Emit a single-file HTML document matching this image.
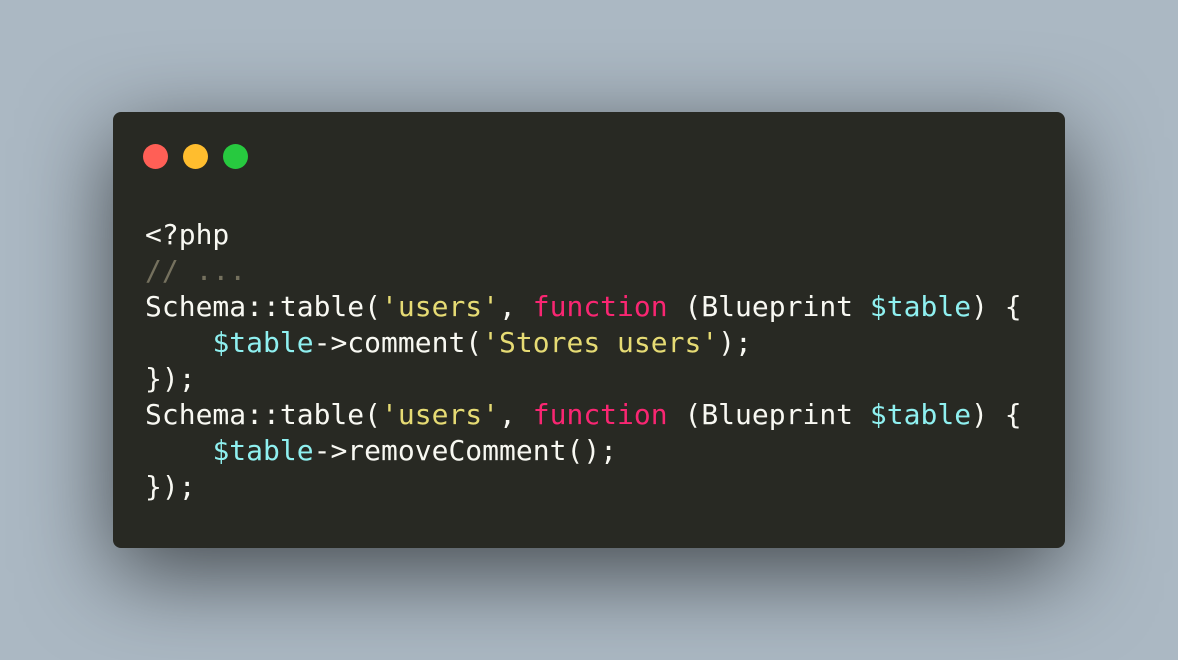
<!DOCTYPE html>
<html><head><style>
html,body{margin:0;padding:0;}
body{width:1178px;height:660px;background:#abb8c3;position:relative;overflow:hidden;}
.win{position:absolute;left:113px;top:112px;width:952px;height:436px;background:#282923;border-radius:8px;box-shadow:0 25px 90px rgba(0,0,0,0.6);}
.dot{position:absolute;top:32px;width:25px;height:25px;border-radius:50%;}
pre{position:absolute;left:32px;top:105px;margin:0;font-family:"DejaVu Sans Mono",monospace;font-size:28px;line-height:36px;color:#f8f8f2;}
.s{color:#e6db74}.k{color:#f92672}.v{color:#8ff0f0}.c{color:#75715e}
</style></head><body>
<div class="win">
<div class="dot" style="left:30px;background:#ff5f56"></div>
<div class="dot" style="left:70px;background:#ffbd2e"></div>
<div class="dot" style="left:110px;background:#27c93f"></div>
<pre>&lt;?php
<span class="c">// ...</span>
Schema::table(<span class="s">'users'</span>, <span class="k">function</span> (Blueprint <span class="v">$table</span>) {
    <span class="v">$table</span>-&gt;comment(<span class="s">'Stores users'</span>);
});
Schema::table(<span class="s">'users'</span>, <span class="k">function</span> (Blueprint <span class="v">$table</span>) {
    <span class="v">$table</span>-&gt;removeComment();
});</pre>
</div>
</body></html>
